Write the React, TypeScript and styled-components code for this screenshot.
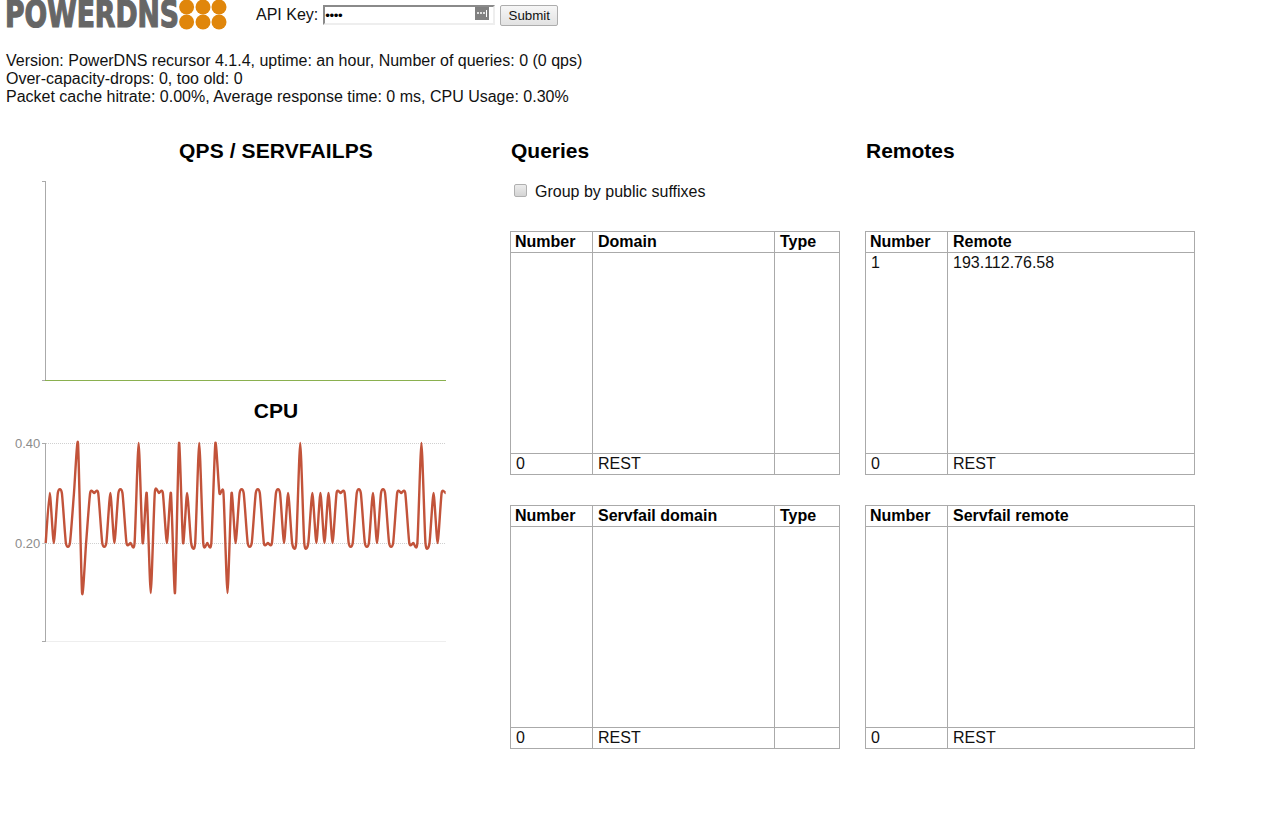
import React from 'react';
import styled, { createGlobalStyle } from 'styled-components';

const GlobalStyle = createGlobalStyle`
  html, body {
    margin: 0;
    padding: 0;
    background: #fff;
    color: #111;
    font-family: "Liberation Sans", Arial, sans-serif;
    font-size: 16px;
  }
`;

// cpu samples, one every 4.04px
const cpuSamples = [
  2, 3, 2, 3, 3, 2, 2, 3, 4, 1, 2, 3, 3, 3, 2, 2, 3, 2, 3, 3, 2, 2, 2, 4, 2, 3, 1, 3, 3, 3, 2, 3, 1, 4, 2, 3, 2, 2, 4, 2, 2, 2,
  4, 3, 3, 1, 3, 2, 3, 3, 2, 2, 3, 3, 2, 2, 2, 3, 3, 2, 3, 2, 2, 4, 2, 2, 3, 2, 3, 2, 3, 2, 3, 3, 3, 2, 2, 3, 3, 2, 2, 3, 2, 3,
  3, 2, 2, 3, 3, 3, 2, 2, 2, 4, 2, 2, 3, 2, 3, 3,
];

const PLOT_LEFT = 45.7;
const PLOT_STEP = 4.04;

const cardinalPath = (values: number[]) => {
  const pts = values.map((v, i) => [PLOT_LEFT + i * PLOT_STEP, 13 + (4 - v) * 50]);
  const k = 0.1;
  let d = `M${pts[0][0]},${pts[0][1]}`;
  for (let i = 0; i < pts.length - 1; i++) {
    const p0 = pts[Math.max(i - 1, 0)];
    const p1 = pts[i];
    const p2 = pts[i + 1];
    const p3 = pts[Math.min(i + 2, pts.length - 1)];
    const c1x = p1[0] + (p2[0] - p0[0]) * k;
    const c1y = p1[1] + (p2[1] - p0[1]) * k;
    const c2x = p2[0] - (p3[0] - p1[0]) * k;
    const c2y = p2[1] - (p3[1] - p1[1]) * k;
    d += `C${c1x.toFixed(2)},${c1y.toFixed(2)},${c2x.toFixed(2)},${c2y.toFixed(2)},${p2[0].toFixed(2)},${p2[1].toFixed(2)}`;
  }
  return d;
};

const App: React.FC = () => (
  <Page>
    <GlobalStyle />
    <Header>
      <Logo>
        <LogoText>POWERDNS</LogoText>
        <svg width="48" height="30" viewBox="0 0 48 30">
          {[7, 22].map(y => [7.6, 24, 40].map(x => <circle key={`${x}-${y}`} cx={x} cy={y} r="7.5" fill="#e0860b" />))}
        </svg>
      </Logo>
      <KeyForm>
        API Key:
        <InputWrap>
          <KeyInput type="password" defaultValue="abcd" />
          <ManagerIcon width="14" height="13" viewBox="0 0 14 13">
            <rect width="14" height="13" fill="#808080" />
            <circle cx="3" cy="6" r="1" fill="#fff" />
            <circle cx="6" cy="6" r="1" fill="#fff" />
            <circle cx="9" cy="6" r="1" fill="#fff" />
            <rect x="11" y="3" width="1" height="7" fill="#fff" />
          </ManagerIcon>
        </InputWrap>
        <SubmitButton type="button">Submit</SubmitButton>
      </KeyForm>
    </Header>

    <Status>
      Version: PowerDNS recursor 4.1.4, uptime: an hour, Number of queries: 0 (0 qps)
      <br />
      Over-capacity-drops: 0, too old: 0
      <br />
      Packet cache hitrate: 0.00%, Average response time: 0 ms, CPU Usage: 0.30%
    </Status>

    <Main>
      <ChartColumn>
        <ChartTitle>QPS / SERVFAILPS</ChartTitle>
        <ChartSvg width="460" height="216">
          <line x1="45.5" y1="11" x2="45.5" y2="211" stroke="#aaa" />
          <line x1="42" y1="11.5" x2="46" y2="11.5" stroke="#aaa" />
          <line x1="42" y1="210.5" x2="46" y2="210.5" stroke="#aaa" />
          <line x1="45" y1="210.5" x2="446" y2="210.5" stroke="#8ab04f" />
        </ChartSvg>
        <ChartTitle $gap>CPU</ChartTitle>
        <ChartSvg width="460" height="220">
          <line x1="46" y1="13.5" x2="446" y2="13.5" stroke="#d0d0d0" strokeDasharray="1 1" />
          <line x1="46" y1="113.5" x2="446" y2="113.5" stroke="#d0d0d0" strokeDasharray="1 1" />
          <line x1="46" y1="211.5" x2="446" y2="211.5" stroke="#eee" />
          <line x1="45.5" y1="13" x2="45.5" y2="212" stroke="#aaa" />
          <line x1="42" y1="13.5" x2="46" y2="13.5" stroke="#aaa" />
          <line x1="42" y1="113.5" x2="46" y2="113.5" stroke="#ccc" />
          <line x1="42" y1="211.5" x2="46" y2="211.5" stroke="#aaa" />
          <AxisLabel x="15" y="18">0.40</AxisLabel>
          <AxisLabel x="15" y="118">0.20</AxisLabel>
          <path d={cardinalPath(cpuSamples)} fill="none" stroke="#c2533a" strokeWidth="2.4" />
        </ChartSvg>
      </ChartColumn>

      <TablesGrid>
        <Column>
          <ColumnTitle>Queries</ColumnTitle>
          <Controls>
            <SuffixLabel>
              <SuffixCheck type="checkbox" />
              Group by public suffixes
            </SuffixLabel>
          </Controls>
          <TopList heading="Domain" withType />
          <TopList heading="Servfail domain" withType />
        </Column>
        <Column>
          <ColumnTitle>Remotes</ColumnTitle>
          <Controls />
          <TopList heading="Remote" count="1" entry="193.112.76.58" />
          <TopList heading="Servfail remote" />
        </Column>
      </TablesGrid>
    </Main>
  </Page>
);

type TopListProps = {
  heading: string;
  withType?: boolean;
  count?: string;
  entry?: string;
};

const TopList: React.FC<TopListProps> = ({ heading, withType, count, entry }) => (
  <ListTable>
    <colgroup>
      <col width="82" />
      <col />
      {withType && <col width="65" />}
    </colgroup>
    <thead>
      <tr>
        <th>Number</th>
        <th>{heading}</th>
        {withType && <th>Type</th>}
      </tr>
    </thead>
    <tbody>
      <BodyRow>
        <td>{count}</td>
        <td>{entry}</td>
        {withType && <td />}
      </BodyRow>
      <tr>
        <td>0</td>
        <td>REST</td>
        {withType && <td />}
      </tr>
    </tbody>
  </ListTable>
);

const Page = styled.div`
  width: 1270px;
  min-height: 840px;
  overflow: hidden;
`;

const Header = styled.div`
  display: flex;
  height: 30px;
  padding-left: 5px;
`;

const Logo = styled.div`
  display: flex;
  width: 251px;
  height: 30px;
`;

// natural width is wider than the drawn logo, scaleX squeezes it into the box
const LogoText = styled.span`
  display: block;
  flex: none;
  width: 174px;
  font-family: "DejaVu Sans Condensed", "DejaVu Sans", sans-serif;
  font-weight: 700;
  font-size: 38px;
  line-height: 28px;
  color: #666;
  -webkit-text-stroke: 1.2px #666;
  white-space: nowrap;
  transform: scaleX(0.78);
  transform-origin: left center;
`;

const KeyForm = styled.form`
  display: flex;
  align-items: flex-start;
  font-size: 16px;
  line-height: 30px;
`;

const InputWrap = styled.div`
  position: relative;
  margin: 5px 5px 0 5px;
  height: 20px;
`;

const KeyInput = styled.input`
  display: block;
  box-sizing: border-box;
  width: 172px;
  height: 20px;
  padding: 0;
  border-style: solid;
  border-width: 2px;
  border-color: #8a8a8a #eee #eee #8a8a8a;
  font-family: "Liberation Sans", Arial, sans-serif;
  font-size: 13.33px;
  letter-spacing: -0.4px;
  outline: none;
`;

const ManagerIcon = styled.svg`
  position: absolute;
  top: 2px;
  left: 152px;
`;

const SubmitButton = styled.button`
  box-sizing: border-box;
  width: 58px;
  height: 21px;
  margin-top: 5px;
  padding: 0;
  border: 1px solid #adadad;
  border-radius: 2px;
  background: linear-gradient(#f6f6f6, #e2e2e2);
  color: #111;
  font-family: "Liberation Sans", Arial, sans-serif;
  font-size: 13.33px;
`;

const Status = styled.div`
  margin-top: 22px;
  padding-left: 6px;
  line-height: 18px;
`;

const Main = styled.div`
  display: flex;
  margin-top: 33px;
`;

const ChartColumn = styled.div`
  width: 510px;
  flex: none;
`;

const ChartTitle = styled.h3<{ $gap?: boolean }>`
  margin: ${p => (p.$gap ? '13px' : '0')} 0 0 0;
  padding-left: 42px;
  text-align: center;
  font-size: 21px;
  letter-spacing: 0.1px;
  line-height: 24px;
  color: #000;
`;

const ChartSvg = styled.svg`
  display: block;
  margin-top: 7px;
`;

const AxisLabel = styled.text`
  font-family: "Liberation Sans", Arial, sans-serif;
  font-size: 13px;
  fill: #8c8c8c;
`;

const TablesGrid = styled.div`
  display: grid;
  grid-template-columns: 330px 330px;
  column-gap: 25px;
`;

const Column = styled.div`
  display: flex;
  flex-direction: column;
`;

const ColumnTitle = styled.h3`
  margin: 0 0 0 1px;
  font-size: 21px;
  line-height: 24px;
  color: #000;
`;

const Controls = styled.div`
  box-sizing: border-box;
  height: 68px;
  padding-top: 18px;
`;

const SuffixLabel = styled.label`
  display: flex;
  align-items: center;
  height: 22px;
  padding-left: 4px;
`;

const SuffixCheck = styled.input`
  appearance: none;
  box-sizing: border-box;
  width: 13px;
  height: 13px;
  margin: -4px 8px 0 0;
  border: 1px solid #b0b0b0;
  border-radius: 2px;
  background: linear-gradient(#ececec, #d4d4d4);
`;

const ListTable = styled.table`
  width: 330px;
  margin-bottom: 30px;
  table-layout: fixed;
  border-collapse: collapse;
  font-size: 16px;
  line-height: 18px;

  th, td {
    border: 1px solid #aaa;
    padding: 1px 5px;
    height: 20px;
    box-sizing: border-box;
    text-align: left;
    vertical-align: top;
  }

  th {
    color: #000;
  }

  th:first-child {
    padding-left: 4px;
  }
`;

const BodyRow = styled.tr`
  td {
    height: 201px;
  }
`;

export default App;
